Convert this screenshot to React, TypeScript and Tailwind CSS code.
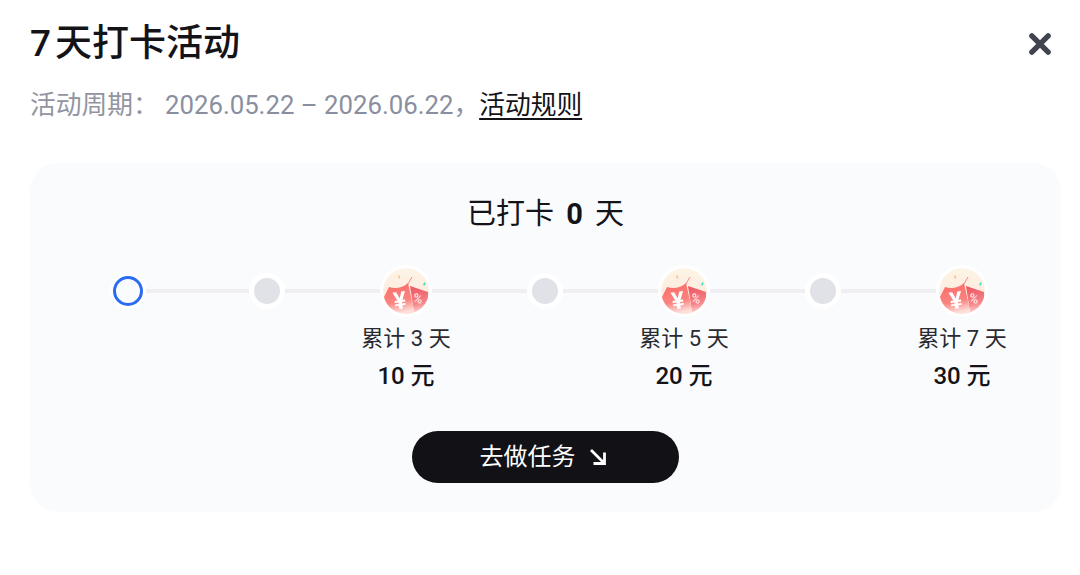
const steps = [
  { kind: 'current' },
  { kind: 'plain' },
  { kind: 'reward', days: 3, amount: 10 },
  { kind: 'plain' },
  { kind: 'reward', days: 5, amount: 20 },
  { kind: 'plain' },
  { kind: 'reward', days: 7, amount: 30 },
]

function RewardIcon() {
  return (
    <svg viewBox="-2 -2 52 52" className="w-[52px] h-[52px] -my-[2px] block shrink-0">
      <defs>
        <linearGradient id="bg" x1="0" y1="0" x2="0" y2="1">
          <stop offset="0" stopColor="#fdf4e6" />
          <stop offset="1" stopColor="#fde6dc" />
        </linearGradient>
        <linearGradient id="big" x1="0" y1="0" x2="0.2" y2="1">
          <stop offset="0" stopColor="#fb6a66" />
          <stop offset="0.65" stopColor="#fb8480" />
          <stop offset="1" stopColor="#fde0dc" />
        </linearGradient>
        <linearGradient id="small" x1="0" y1="0" x2="0.1" y2="1">
          <stop offset="0" stopColor="#ee5560" />
          <stop offset="0.65" stopColor="#f5868a" />
          <stop offset="1" stopColor="#fde0dc" />
        </linearGradient>
        <clipPath id="round">
          <circle cx="24" cy="24" r="23" />
        </clipPath>
        <filter id="soft" x="-10%" y="-10%" width="120%" height="120%">
          <feGaussianBlur stdDeviation="0.35" />
        </filter>
      </defs>
      <circle cx="24" cy="24" r="26" fill="#ffffff" />
      <g clipPath="url(#round)" filter="url(#soft)">
        <circle cx="24" cy="24" r="23" fill="url(#bg)" />
        <path d="M28 19 L46 25 L46 48 L32.5 48 Z" fill="url(#small)" />
        <path d="M7 20 C13 22 21 21 26 16 L33 48 L3 48 L2 30 Z" fill="url(#big)" />
        <path d="M26 17 L30 10" stroke="#f47f7a" strokeWidth="0.9" />
        <rect x="16.4" y="8.5" width="1.5" height="3.2" fill="#f8c08a" transform="rotate(-20 17 10)" />
        <rect x="41.6" y="15.5" width="1.6" height="3" fill="#3fdcc0" transform="rotate(30 42.5 17)" />
      </g>
      <g filter="url(#soft)">
        <text x="18" y="42" textAnchor="middle" fontSize="24" fontWeight="700" fill="#ffffff" fontFamily="Roboto, sans-serif" transform="rotate(-8 18 34)">¥</text>
        <text x="36" y="36" textAnchor="middle" fontSize="13" fontWeight="700" fill="#ffdcda" fontFamily="Roboto, sans-serif" transform="rotate(12 36 31)">%</text>
      </g>
    </svg>
  )
}

function Node({ kind }: { kind: string }) {
  if (kind === 'reward') return <RewardIcon />
  if (kind === 'current') {
    return (
      <div className="w-[36px] h-[36px] rounded-full bg-white flex items-center justify-center">
        <div className="w-[30px] h-[30px] rounded-full border-[3px] border-[#2b6bf3] bg-[#fafbfd]" />
      </div>
    )
  }
  return (
    <div className="w-[36px] h-[36px] rounded-full bg-white flex items-center justify-center">
      <div className="w-[26px] h-[26px] rounded-full bg-[#e1e2e8]" />
    </div>
  )
}

export default function App() {
  return (
    <div
      className="w-[1080px] h-[575px] bg-white px-[30px] overflow-hidden"
      style={{ fontFamily: 'Roboto, "Noto Sans CJK SC", sans-serif' }}
    >
      <div className="flex items-center justify-between pt-[18px]">
        <h1 className="text-[37px] leading-[52px] font-medium text-[#141418] flex">
          <span>7</span>
          <span className="ml-[4px]">天打卡活动</span>
        </h1>
        <svg viewBox="0 0 24 24" className="w-[26px] h-[26px] -mr-[3px]" fill="none" stroke="#3f444f" strokeWidth="5" strokeLinecap="round">
          <path d="M4.5 4.5 L19.5 19.5 M19.5 4.5 L4.5 19.5" />
        </svg>
      </div>

      <p className="mt-[17px] text-[25.75px] leading-[36px] text-[#8a8fa0] flex">
        <span className="text-[#92959f] w-[135px]">活动周期：</span>
        <span>2026.05.22 – 2026.06.22，</span>
        <span className="text-[#141418] underline underline-offset-4">活动规则</span>
      </p>

      <section className="mt-[40px] w-[1031px] h-[349px] rounded-[28px] bg-[#fafbfd] pt-[31px] flex flex-col items-center">
        <h2 className="text-[29px] leading-[40px] text-[#141418]">
          已打卡 <span className="font-bold mx-[5px]">0</span> 天
        </h2>

        <div className="mt-[33px] -ml-[1px] grid grid-cols-7 w-[973px]">
          {steps.map((s, i) => (
            <div key={i} className="flex flex-col items-center">
              <div className="flex items-center w-full h-[48px]">
                <div className={`flex-1 h-[4px] ${i === 0 ? '' : 'bg-[#eeeef3]'}`} />
                <Node kind={s.kind} />
                <div className={`flex-1 h-[4px] ${i === steps.length - 1 ? '' : 'bg-[#eeeef3]'}`} />
              </div>
              {s.kind === 'reward' && (
                <>
                  <p className="mt-[7px] text-[22px] leading-[34px] text-[#2a2a30]">累计 {s.days} 天</p>
                  <p className="mt-[2px] text-[24px] leading-[36px] font-medium text-[#141418]">{s.amount} 元</p>
                </>
              )}
            </div>
          ))}
        </div>

        <button className="mt-[37px] w-[267px] h-[52px] rounded-full bg-[#111116] text-white text-[24px] pr-[6px] flex items-center justify-center gap-[14px]">
          <span>去做任务</span>
          <svg viewBox="0 0 16 16" className="w-[16px] h-[16px]" fill="none" stroke="#ffffff" strokeWidth="2.8">
            <path d="M1 1 L14 14 M14.5 3.5 V14.5 H3.5" />
          </svg>
        </button>
      </section>
    </div>
  )
}
